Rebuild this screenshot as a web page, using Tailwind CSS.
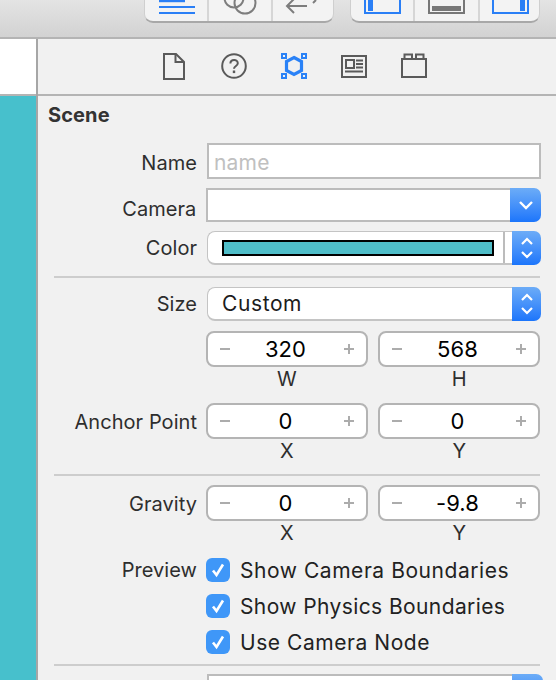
<!DOCTYPE html>
<html>
<head>
<meta charset="utf-8">
<script src="https://cdn.jsdelivr.net/npm/@tailwindcss/browser@4"></script>
</head>
<body class="m-0">
<div class="w-[556px] h-[680px] overflow-hidden flex flex-col bg-[#f1f1f1] text-[#2e2e2e] font-['Inter',sans-serif] text-[20px] tracking-[0.05px] leading-none">
  <!-- top toolbar -->
  <div class="h-[39px] shrink-0 border-b-2 border-[#b4b4b4] bg-gradient-to-b from-[#e4e4e4] to-[#d2d2d2] flex items-start">
    <div class="ml-[144px] w-[190px] h-[23px] flex bg-[#f3f3f3] rounded-b-[9px] border-b-2 border-x border-[#a8a8a8] border-x-[#cfcfcf]">
      <div class="w-[64px] border-r-2 border-[#d6d6d6] relative overflow-hidden">
        <svg class="absolute left-[13px] top-0" width="37" height="22" viewBox="0 0 37 22" fill="#2a7ff6"><rect x="1" y="0" width="26" height="2.2"/><rect x="1" y="6" width="36" height="2"/><rect x="1" y="12" width="36" height="2"/></svg>
      </div>
      <div class="w-[64px] border-r-2 border-[#d6d6d6] relative overflow-hidden">
        <svg class="absolute left-[14px] top-0" width="34" height="22" viewBox="0 0 34 22" fill="none" stroke="#7d7d7d" stroke-width="2"><circle cx="11" cy="-2" r="9.5"/><circle cx="22" cy="3" r="10.5"/></svg>
      </div>
      <div class="flex-1 relative overflow-hidden">
        <svg class="absolute left-[12px] top-0" width="36" height="22" viewBox="0 0 36 22" fill="none" stroke="#7d7d7d" stroke-width="2"><path d="M9 -1 L2 6 L9 13 M2 6 H22"/><path d="M28 3 L31 0"/></svg>
      </div>
    </div>
    <div class="ml-[16px] w-[190px] h-[23px] flex bg-[#f3f3f3] rounded-b-[9px] border-b-2 border-x border-[#a8a8a8] border-x-[#cfcfcf]">
      <div class="w-[64px] border-r-2 border-[#d6d6d6] relative overflow-hidden">
        <svg class="absolute left-[13px] top-0" width="37" height="15" viewBox="0 0 37 15" fill="none"><path d="M1 -2 V13 H36 V-2" stroke="#2a7ff6" stroke-width="2"/><rect x="4" y="0" width="5" height="11" fill="#2a7ff6"/></svg>
      </div>
      <div class="w-[65px] border-r-2 border-[#d6d6d6] relative overflow-hidden">
        <svg class="absolute left-[13px] top-0" width="37" height="15" viewBox="0 0 37 15" fill="none"><path d="M1 -2 V13 H36 V-2" stroke="#777" stroke-width="2"/><rect x="4" y="6" width="29" height="5" fill="#777"/></svg>
      </div>
      <div class="flex-1 relative overflow-hidden">
        <svg class="absolute left-[12px] top-0" width="37" height="15" viewBox="0 0 37 15" fill="none"><path d="M1 -2 V13 H36 V-2" stroke="#2a7ff6" stroke-width="2"/><rect x="28" y="0" width="5" height="11" fill="#2a7ff6"/></svg>
      </div>
    </div>
  </div>
  <div class="flex flex-1 min-h-0">
    <!-- left strip -->
    <div class="w-[36px] shrink-0 flex flex-col">
      <div class="h-[55px] bg-white"></div>
      <div class="h-[2px] bg-[#b4b4b4]"></div>
      <div class="flex-1 bg-[#47c0cc]"></div>
    </div>
    <div class="w-[2px] shrink-0 bg-[#a6a6a6]"></div>
    <!-- inspector -->
    <div class="flex-1 min-w-0 flex flex-col">
      <div class="h-[55px] shrink-0 flex items-start">
        <svg class="ml-[125px] mt-[14px]" width="22" height="27" viewBox="0 0 22 27" fill="none" stroke="#5a5a5a" stroke-width="2"><path d="M1 1 H13 L21 9 V26 H1 Z"/><path d="M12.5 2 V9 H20"/></svg>
        <svg class="ml-[36px] mt-[14px]" width="26" height="26" viewBox="0 0 26 26" fill="none" stroke="#5a5a5a"><circle cx="13" cy="13" r="11.8" stroke-width="2"/><path d="M9.4 10.5 C9.4 5.9 16.8 5.9 16.8 10.3 C16.8 13 13 13 13 15.8" stroke-width="2"/><rect x="11.8" y="17.5" width="2.4" height="2.6" fill="#5a5a5a" stroke="none"/></svg>
        <svg class="ml-[34px] mt-[14px]" width="26" height="26" viewBox="0 0 26 26" fill="none" stroke="#2a82f7"><path d="M13 4.5 L20.5 8.5 V17.5 L13 21.5 L5.5 17.5 V8.5 Z" stroke-width="3.2"/><rect x="1" y="1" width="4" height="4" stroke-width="2" fill="#f1f1f1"/><rect x="21" y="1" width="4" height="4" stroke-width="2" fill="#f1f1f1"/><rect x="1" y="21" width="4" height="4" stroke-width="2" fill="#f1f1f1"/><rect x="21" y="21" width="4" height="4" stroke-width="2" fill="#f1f1f1"/></svg>
        <svg class="ml-[34px] mt-[16px]" width="26" height="23" viewBox="0 0 26 23" fill="none" stroke="#5a5a5a" stroke-width="2"><rect x="1" y="1" width="24" height="21"/><rect x="5" y="5" width="8" height="8"/><path d="M15 5.5 H22 M15 9 H22 M15 12.5 H22 M4 16.5 H22"/></svg>
        <svg class="ml-[34px] mt-[14px]" width="26" height="25" viewBox="0 0 26 25" fill="none" stroke="#5a5a5a" stroke-width="2"><rect x="1" y="6" width="24" height="18"/><path d="M3.5 6 V1.5 H11 V6 M15 6 V1.5 H22.5 V6"/></svg>
      </div>
      <div class="h-[2px] shrink-0 bg-[#b4b4b4]"></div>
      <div class="flex-1 min-h-0 pr-[15px]">
        <div class="h-[36px] pl-[10px] pt-[2px] flex items-center font-bold text-[20px] tracking-[0.1px] text-[#333]">Scene</div>
        <!-- Name -->
        <div class="mt-[11px] flex items-center h-[36px]">
          <div class="w-[159px] text-right pt-[4px]">Name</div>
          <div class="ml-[10px] w-[334px] h-full bg-white border-2 border-[#bcbcbc] flex items-center pl-[5px] pt-[2px] text-[21px] tracking-[0.2px] text-[#c0c0c0]">name</div>
        </div>
        <!-- Camera -->
        <div class="mt-[9px] flex items-center h-[34px]">
          <div class="w-[159px] text-right pt-[7px]">Camera</div>
          <div class="ml-[10px] w-[336px] h-full flex">
            <div class="flex-1 bg-white border-2 border-r-0 border-[#bcbcbc]"></div>
            <div class="w-[31px] rounded-r-[7px] bg-gradient-to-b from-[#6cacf7] to-[#1b75fb] flex items-center justify-center">
              <svg width="16" height="10" viewBox="0 0 16 10" fill="none" stroke="#fff" stroke-width="2.4"><path d="M2 2 L8 8 L14 2"/></svg>
            </div>
          </div>
        </div>
        <!-- Color -->
        <div class="mt-[9px] flex items-center h-[34px]">
          <div class="w-[159px] text-right">Color</div>
          <div class="ml-[10px] w-[334px] h-full flex">
            <div class="flex-1 bg-white rounded-l-[8px] border-b-2 border-l border-t border-[#c4c4c4] flex">
              <div class="flex-1 flex items-center pl-[14px]"><div class="w-[272px] h-[16px] bg-[#4fbdc8] border-2 border-black"></div></div>
              <div class="w-[2px] bg-[#bcbcbc]"></div>
              <div class="w-[7px]"></div>
            </div>
            <div class="w-[29px] rounded-r-[7px] bg-gradient-to-b from-[#6cacf7] to-[#1b75fb] flex items-center justify-center">
              <svg width="14" height="24" viewBox="0 0 14 24" fill="none" stroke="#fff" stroke-width="2.2"><path d="M2 8 L7 3 L12 8 M2 16 L7 21 L12 16"/></svg>
            </div>
          </div>
        </div>
        <div class="mt-[11px] ml-[16px] w-[486px] h-[2px] bg-[#cdcdcd]"></div>
        <!-- Size -->
        <div class="mt-[9px] flex items-center h-[34px]">
          <div class="w-[159px] text-right">Size</div>
          <div class="ml-[10px] w-[334px] h-full flex">
            <div class="flex-1 bg-white rounded-l-[8px] border-b-2 border-l border-t border-[#c4c4c4] flex items-center pl-[14px] text-[21px] tracking-[0.6px] text-[#1c1c1c]">Custom</div>
            <div class="w-[29px] rounded-r-[7px] bg-gradient-to-b from-[#6cacf7] to-[#1b75fb] flex items-center justify-center">
              <svg width="14" height="24" viewBox="0 0 14 24" fill="none" stroke="#fff" stroke-width="2.2"><path d="M2 8 L7 3 L12 8 M2 16 L7 21 L12 16"/></svg>
            </div>
          </div>
        </div>
        <!-- Size steppers -->
        <div class="mt-[10px] ml-[168px] flex gap-[10px] h-[36px]">
          <div class="w-[162px] h-full bg-white rounded-[8px] border-2 border-[#b4b4b4] flex items-center justify-between pl-[12px] pr-[12px] text-black">
            <span class="w-[10px] h-[2px] bg-[#acacac]"></span><span class="mr-[3px] text-[22px]">320</span><span class="relative w-[10px] h-[10px]"><span class="absolute left-0 top-[4px] w-[10px] h-[2px] bg-[#acacac]"></span><span class="absolute top-0 left-[4px] h-[10px] w-[2px] bg-[#acacac]"></span></span>
          </div>
          <div class="w-[162px] h-full bg-white rounded-[8px] border-2 border-[#b4b4b4] flex items-center justify-between pl-[12px] pr-[12px] text-black">
            <span class="w-[10px] h-[2px] bg-[#acacac]"></span><span class="mr-[3px] text-[22px]">568</span><span class="relative w-[10px] h-[10px]"><span class="absolute left-0 top-[4px] w-[10px] h-[2px] bg-[#acacac]"></span><span class="absolute top-0 left-[4px] h-[10px] w-[2px] bg-[#acacac]"></span></span>
          </div>
        </div>
        <div class="ml-[168px] flex gap-[10px] h-[24px] items-center"><div class="w-[163px] text-center">W</div><div class="w-[165px] text-center">H</div></div>
        <!-- Anchor -->
        <div class="mt-[12px] flex items-center h-[36px]">
          <div class="w-[159px] text-right pt-[2px]">Anchor Point</div>
          <div class="ml-[9px] flex gap-[10px] h-full">
            <div class="w-[162px] h-full bg-white rounded-[8px] border-2 border-[#b4b4b4] flex items-center justify-between pl-[12px] pr-[12px] text-black">
              <span class="w-[10px] h-[2px] bg-[#acacac]"></span><span class="mr-[3px] text-[22px]">0</span><span class="relative w-[10px] h-[10px]"><span class="absolute left-0 top-[4px] w-[10px] h-[2px] bg-[#acacac]"></span><span class="absolute top-0 left-[4px] h-[10px] w-[2px] bg-[#acacac]"></span></span>
            </div>
            <div class="w-[162px] h-full bg-white rounded-[8px] border-2 border-[#b4b4b4] flex items-center justify-between pl-[12px] pr-[12px] text-black">
              <span class="w-[10px] h-[2px] bg-[#acacac]"></span><span class="mr-[3px] text-[22px]">0</span><span class="relative w-[10px] h-[10px]"><span class="absolute left-0 top-[4px] w-[10px] h-[2px] bg-[#acacac]"></span><span class="absolute top-0 left-[4px] h-[10px] w-[2px] bg-[#acacac]"></span></span>
            </div>
          </div>
        </div>
        <div class="ml-[168px] flex gap-[10px] h-[24px] items-center"><div class="w-[163px] text-center">X</div><div class="w-[165px] text-center">Y</div></div>
        <div class="mt-[11px] ml-[16px] w-[486px] h-[2px] bg-[#cdcdcd]"></div>
        <!-- Gravity -->
        <div class="mt-[9px] flex items-center h-[36px]">
          <div class="w-[159px] text-right pt-[2px]">Gravity</div>
          <div class="ml-[9px] flex gap-[10px] h-full">
            <div class="w-[162px] h-full bg-white rounded-[8px] border-2 border-[#b4b4b4] flex items-center justify-between pl-[12px] pr-[12px] text-black">
              <span class="w-[10px] h-[2px] bg-[#acacac]"></span><span class="mr-[3px] text-[22px]">0</span><span class="relative w-[10px] h-[10px]"><span class="absolute left-0 top-[4px] w-[10px] h-[2px] bg-[#acacac]"></span><span class="absolute top-0 left-[4px] h-[10px] w-[2px] bg-[#acacac]"></span></span>
            </div>
            <div class="w-[162px] h-full bg-white rounded-[8px] border-2 border-[#b4b4b4] flex items-center justify-between pl-[12px] pr-[12px] text-black">
              <span class="w-[10px] h-[2px] bg-[#acacac]"></span><span class="mr-[3px] text-[22px]">-9.8</span><span class="relative w-[10px] h-[10px]"><span class="absolute left-0 top-[4px] w-[10px] h-[2px] bg-[#acacac]"></span><span class="absolute top-0 left-[4px] h-[10px] w-[2px] bg-[#acacac]"></span></span>
            </div>
          </div>
        </div>
        <div class="ml-[168px] flex gap-[10px] h-[24px] items-center"><div class="w-[163px] text-center">X</div><div class="w-[165px] text-center">Y</div></div>
        <!-- Preview -->
        <div class="mt-[13px] flex items-center h-[24px]">
          <div class="w-[159px] text-right">Preview</div>
          <div class="ml-[9px] w-[24px] h-[24px] rounded-[6px] bg-[#3f97f8] flex items-center justify-center"><svg width="16" height="16" viewBox="0 0 16 16" fill="none" stroke="#fff" stroke-width="2.6"><path d="M3 8.5 L6.5 13 L13 2.5"/></svg></div>
          <div class="ml-[10px] text-[21px] tracking-[0.55px] text-[#222]">Show Camera Boundaries</div>
        </div>
        <div class="mt-[12px] flex items-center h-[24px]">
          <div class="ml-[168px] w-[24px] h-[24px] rounded-[6px] bg-[#3f97f8] flex items-center justify-center"><svg width="16" height="16" viewBox="0 0 16 16" fill="none" stroke="#fff" stroke-width="2.6"><path d="M3 8.5 L6.5 13 L13 2.5"/></svg></div>
          <div class="ml-[10px] text-[21px] tracking-[0.4px] text-[#222]">Show Physics Boundaries</div>
        </div>
        <div class="mt-[12px] flex items-center h-[24px]">
          <div class="ml-[168px] w-[24px] h-[24px] rounded-[6px] bg-[#3f97f8] flex items-center justify-center"><svg width="16" height="16" viewBox="0 0 16 16" fill="none" stroke="#fff" stroke-width="2.6"><path d="M3 8.5 L6.5 13 L13 2.5"/></svg></div>
          <div class="ml-[10px] text-[21px] tracking-[0.55px] text-[#222]">Use Camera Node</div>
        </div>
        <div class="mt-[10px] ml-[16px] w-[486px] h-[2px] bg-[#cdcdcd]"></div>
        <div class="mt-[8px] ml-[169px] w-[336px] h-[34px] flex">
          <div class="flex-1 bg-white border-2 border-r-0 border-[#bcbcbc]"></div>
          <div class="w-[31px] rounded-r-[7px] bg-gradient-to-b from-[#6cacf7] to-[#1b75fb]"></div>
        </div>
      </div>
    </div>
  </div>
</div>
</body>
</html>
